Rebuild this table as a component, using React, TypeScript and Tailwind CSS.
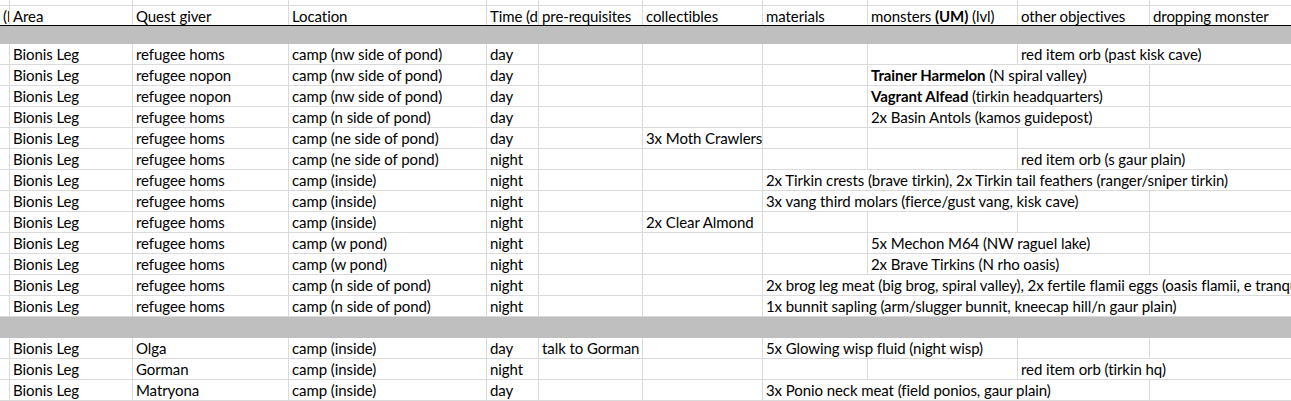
import React from "react";

type Cell = { text?: React.ReactNode; span?: number };

const spanClass: Record<number, string> = {
  1: "",
  2: "col-span-2",
  3: "col-span-3",
  4: "col-span-4",
};

const cols =
  "grid grid-cols-[10px_123px_156px_198px_52px_104px_120px_105px_150px_132px_200px]";

const base = (area: string, giver: string, loc: string, time: string): Cell[] => [
  {},
  { text: area },
  { text: giver },
  { text: loc },
  { text: time },
];

const rowsA: Cell[][] = [
  [...base("Bionis Leg", "refugee homs", "camp (nw side of pond)", "day"), {}, {}, {}, {}, { text: "red item orb (past kisk cave)", span: 2 }],
  [...base("Bionis Leg", "refugee nopon", "camp (nw side of pond)", "day"), {}, {}, {}, { text: <><b>Trainer Harmelon</b> (N spiral valley)</>, span: 2 }, {}],
  [...base("Bionis Leg", "refugee nopon", "camp (nw side of pond)", "day"), {}, {}, {}, { text: <><b>Vagrant Alfead</b> (tirkin headquarters)</>, span: 2 }, {}],
  [...base("Bionis Leg", "refugee homs", "camp (n side of pond)", "day"), {}, {}, {}, { text: "2x Basin Antols (kamos guidepost)", span: 2 }, {}],
  [...base("Bionis Leg", "refugee homs", "camp (ne side of pond)", "day"), {}, { text: "3x Moth Crawlers" }, {}, {}, {}, {}],
  [...base("Bionis Leg", "refugee homs", "camp (ne side of pond)", "night"), {}, {}, {}, {}, { text: "red item orb (s gaur plain)", span: 2 }],
  [...base("Bionis Leg", "refugee homs", "camp (inside)", "night"), {}, {}, { text: "2x Tirkin crests (brave tirkin), 2x Tirkin tail feathers (ranger/sniper tirkin)", span: 4 }],
  [...base("Bionis Leg", "refugee homs", "camp (inside)", "night"), {}, {}, { text: "3x vang third molars (fierce/gust vang, kisk cave)", span: 3 }, {}],
  [...base("Bionis Leg", "refugee homs", "camp (inside)", "night"), {}, { text: "2x Clear Almond" }, {}, {}, {}, {}],
  [...base("Bionis Leg", "refugee homs", "camp (w pond)", "night"), {}, {}, {}, { text: "5x Mechon M64 (NW raguel lake)", span: 2 }, {}],
  [...base("Bionis Leg", "refugee homs", "camp (w pond)", "night"), {}, {}, {}, { text: "2x Brave Tirkins (N rho oasis)", span: 2 }, {}],
  [...base("Bionis Leg", "refugee homs", "camp (n side of pond)", "night"), {}, {}, { text: "2x brog leg meat (big brog, spiral valley), 2x fertile flamii eggs (oasis flamii, e tranquil pond)", span: 4 }],
  [...base("Bionis Leg", "refugee homs", "camp (n side of pond)", "night"), {}, {}, { text: "1x bunnit sapling (arm/slugger bunnit, kneecap hill/n gaur plain)", span: 4 }],
];

const rowsB: Cell[][] = [
  [...base("Bionis Leg", "Olga", "camp (inside)", "day"), { text: "talk to Gorman" }, {}, { text: "5x Glowing wisp fluid (night wisp)", span: 2 }, {}, {}],
  [...base("Bionis Leg", "Gorman", "camp (inside)", "night"), {}, {}, {}, {}, { text: "red item orb (tirkin hq)", span: 2 }],
  [...base("Bionis Leg", "Matryona", "camp (inside)", "day"), {}, {}, { text: "3x Ponio neck meat (field ponios, gaur plain)", span: 3 }, {}],
];

const header: React.ReactNode[] = [
  "(lvl",
  "Area",
  "Quest giver",
  "Location",
  "Time (day/night)",
  "pre-requisites",
  "collectibles",
  "materials",
  <>monsters <b>(UM)</b> (lvl)</>,
  "other objectives",
  "dropping monster",
];

function Row({ cells }: { cells: Cell[] }) {
  return (
    <div className={`${cols} h-[21px]`}>
      {cells.map((c, i) => (
        <div
          key={i}
          className={`${spanClass[c.span ?? 1]} h-[21px] border-r border-b border-[#dadada] pl-[3px] pb-[1px] flex items-end overflow-hidden whitespace-nowrap leading-[18px]`}
        >
          <span>{c.text}</span>
        </div>
      ))}
    </div>
  );
}

export default function App() {
  return (
    <div
      className="w-[1291px] h-[401px] overflow-hidden bg-white text-black text-[15px] tracking-[-0.08px]"
      style={{ fontFamily: "Lato, 'Liberation Sans', sans-serif" }}
    >
      {/* row above the header, mostly scrolled out */}
      <div className={`${cols} h-[6px]`}>
        {header.map((_, i) => (
          <div key={i} className="border-r border-b border-[#dadada]" />
        ))}
      </div>

      {/* header */}
      <div className={`${cols} h-[20px] border-b border-black`}>
        {header.map((h, i) => (
          <div
            key={i}
            className="h-[19px] border-r border-[#dadada] pl-[3px] flex items-end overflow-hidden whitespace-nowrap leading-[18px]"
          >
            <span>{h}</span>
          </div>
        ))}
      </div>

      <div className="h-[18px] bg-[#bfbfbf]" />

      {rowsA.map((r, i) => (
        <Row key={i} cells={r} />
      ))}

      <div className="h-[21px] bg-[#bfbfbf]" />

      {rowsB.map((r, i) => (
        <Row key={i} cells={r} />
      ))}
    </div>
  );
}
